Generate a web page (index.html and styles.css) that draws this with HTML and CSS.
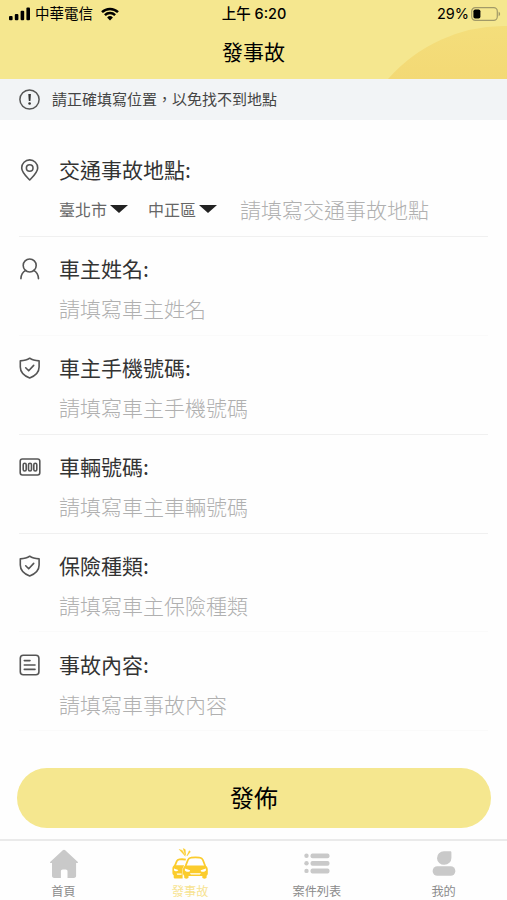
FILE: index.html
```html
<!DOCTYPE html>
<html lang="zh-Hant">
<head>
    <meta charset="UTF-8">
    <meta name="viewport" content="width=device-width, initial-scale=1.0">
    <title>發事故</title>
    <link rel="stylesheet" href="styles.css">
</head>
<body>
    <!-- Header -->
    <header class="header">
        <svg class="header-circle" width="119" height="53" viewBox="0 0 119 53">
            <defs>
                <linearGradient id="sun" x1="0" y1="0" x2="0" y2="1">
                    <stop offset="0" stop-color="#f4de7b" />
                    <stop offset="1" stop-color="#f3d975" />
                </linearGradient>
            </defs>
            <path d="M0 53A155 155 0 0 1 119 0V53Z" fill="url(#sun)" />
        </svg>
        <div class="status-bar">
            <div class="status-left">
                <svg width="22" height="14" viewBox="0 0 22 14">
                    <rect x="0" y="9" width="3.6" height="4.2" rx="1" />
                    <rect x="5.8" y="7" width="3.6" height="6.2" rx="1" />
                    <rect x="11.6" y="3.8" width="3.6" height="9.4" rx="1" />
                    <rect x="17.4" y="0.4" width="3.6" height="12.8" rx="1" />
                </svg>
                <span class="carrier">中華電信</span>
                <svg class="wifi" width="18" height="14" viewBox="0 0 18 14">
                    <path d="M1 5.1a11.6 11.6 0 0 1 16 0M3.9 8.1a7.4 7.4 0 0 1 10.2 0" fill="none" stroke="#000" stroke-width="2.5" />
                    <path d="M9 13.4L6.1 10.5a4.2 4.2 0 0 1 5.8 0Z" />
                </svg>
            </div>
            <span class="time">上午 6:20</span>
            <div class="status-right">
                <span>29%</span>
                <svg width="30" height="14" viewBox="0 0 30 14">
                    <rect x="0.7" y="0.7" width="25.6" height="12.6" rx="3.6" fill="none" stroke="#a29a68" stroke-width="1.2" />
                    <rect x="2.4" y="2.4" width="7" height="9.2" rx="1.8" />
                    <path d="M27.6 4.8c2 .7 2 3.7 0 4.4Z" fill="#a29a68" />
                </svg>
            </div>
        </div>
        <h1 class="title">發事故</h1>
    </header>

    <!-- Notice -->
    <div class="notice">
        <svg width="22" height="22" viewBox="0 0 22 22">
            <circle cx="11.5" cy="10.5" r="9.6" fill="none" stroke="#555" stroke-width="1.5" />
            <path d="M10.3 5h2.6l-.5 7h-1.6Z" fill="#333" />
            <circle cx="11.6" cy="14.5" r="1.3" fill="#333" />
        </svg>
        <p>請正確填寫位置，以免找不到地點</p>
    </div>

    <!-- Form -->
    <main class="form">
        <section class="field">
            <svg class="field-icon" viewBox="0 0 22 22">
                <path d="M10.7 21C7.3 17.4 2.7 13.2 2.7 8.9a8 8 0 0 1 16 0C18.7 13.2 14.1 17.4 10.7 21Z" />
                <circle cx="10.7" cy="9" r="3.3" />
            </svg>
            <div class="field-body">
                <h2>交通事故地點:</h2>
                <div class="field-line">
                    <span class="select">臺北市<i class="arrow"></i></span>
                    <span class="select">中正區<i class="arrow"></i></span>
                    <span class="hint">請填寫交通事故地點</span>
                </div>
            </div>
        </section>
        <section class="field faint">
            <svg class="field-icon" viewBox="0 0 22 22">
                <circle cx="10.7" cy="7.5" r="6.5" />
                <path d="M1.9 20.6c.2-4.2 2.1-6.7 4.9-8.2M19.5 20.6c-.2-4.2-2.1-6.7-4.9-8.2" />
            </svg>
            <div class="field-body">
                <h2>車主姓名:</h2>
                <div class="field-line"><span class="hint">請填寫車主姓名</span></div>
            </div>
        </section>
        <section class="field">
            <svg class="field-icon" viewBox="0 0 22 22">
                <path d="M10.7 1.2C8.2 3.1 4.7 3.8 1.3 3.9V10c0 5.4 4.2 9 9.4 11 5.2-2 9.4-5.6 9.4-11V3.9C16.7 3.8 13.2 3.1 10.7 1.2Z" />
                <path d="M6.7 10.8l3 3 5-5.4" />
            </svg>
            <div class="field-body">
                <h2>車主手機號碼:</h2>
                <div class="field-line"><span class="hint">請填寫車主手機號碼</span></div>
            </div>
        </section>
        <section class="field">
            <svg class="field-icon" viewBox="0 0 22 22">
                <rect x="1.2" y="3" width="19.6" height="16" rx="2.2" />
                <rect x="4.2" y="7.2" width="3" height="7.8" rx="1.5" />
                <rect x="9.5" y="7.2" width="3" height="7.8" rx="1.5" />
                <rect x="14.8" y="7.2" width="3" height="7.8" rx="1.5" />
            </svg>
            <div class="field-body">
                <h2>車輛號碼:</h2>
                <div class="field-line"><span class="hint">請填寫車主車輛號碼</span></div>
            </div>
        </section>
        <section class="field faint">
            <svg class="field-icon" viewBox="0 0 22 22">
                <path d="M10.7 1.2C8.2 3.1 4.7 3.8 1.3 3.9V10c0 5.4 4.2 9 9.4 11 5.2-2 9.4-5.6 9.4-11V3.9C16.7 3.8 13.2 3.1 10.7 1.2Z" />
                <path d="M6.7 10.8l3 3 5-5.4" />
            </svg>
            <div class="field-body">
                <h2>保險種類:</h2>
                <div class="field-line"><span class="hint">請填寫車主保險種類</span></div>
            </div>
        </section>
        <section class="field faint">
            <svg class="field-icon" viewBox="0 0 22 22">
                <rect x="1.3" y="1.3" width="18.6" height="19.4" rx="3" />
                <path d="M5.3 6.6h5.7M5.3 11h10.7M5.3 15.4h10.7" />
            </svg>
            <div class="field-body">
                <h2>事故內容:</h2>
                <div class="field-line"><span class="hint">請填寫車事故內容</span></div>
            </div>
        </section>
    </main>

    <button class="submit" type="button">發佈</button>

    <!-- Tab bar -->
    <nav class="tab-bar">
        <a class="tab">
            <svg width="38" height="34" viewBox="0 0 38 34" fill="#c9c9c9">
                <path d="M20 2.8c.5 0 .8.2 1.2.5L33.6 14.8c.7.7.4 1.3-.5 1.3h-1V28.7c0 1.400-.8 2.2-2.2 2.2H23.500V24.3c0-1.200-.7-1.900-1.900-1.900h-2.800c-1.200 0-1.900.7-1.900 1.900v6.600H10.200C8.800 30.900 8 30.100 8 28.700V16.1H6.900c-.9 0-1.200-.6-.5-1.300L18.800 3.300c.4-.3.700-.5 1.200-.5Z" />
            </svg>
            <span>首頁</span>
        </a>
        <a class="tab active">
            <svg width="38" height="34" viewBox="0 0 38 34" fill="#fbcc2d">
                <path d="M8.200 2.400l3 1 3.200 5.800ZM12.300 1.600l1.900 6.400.4-.4-.4-5ZM18.200 3.800l1.200.9-3.500 4.300Z" stroke="#fbcc2d" stroke-width="0.500" />
                <!-- rear car -->
                <path d="M3.600 19.400l2.200-5.200c.5-1.200 1.200-1.600 2.600-1.800 1.900-.2 4.500-.2 6.400.2" fill="none" stroke="#fbcc2d" stroke-width="1.800" />
                <path d="M3.400 18.200h9.800l-1.600 3.200v10H3.600c-.5 0-.9-.3-.9-.8v-2.300c-.9-.5-1.300-1.300-1.300-2.500v-4.300c0-1.600.8-2.600 2-3.300Z" />
                <path d="M3 21.600l4.200 1.500c.1 1.500-3.300 1.500-4.200.2ZM5.600 26.400h5v1.300H6.200Z" fill="#fff" />
                <!-- front car -->
                <path d="M14.600 19l2.300-6c.6-1.500 1.500-2.100 3.200-2.300 2.800-.4 5.800-.4 8.600 0 1.700.2 2.600.8 3.200 2.300l2.300 6" fill="none" stroke="#fbcc2d" stroke-width="1.800" />
                <path d="M14.500 18.400h19.800c1.900 1 2.500 2.300 2.500 4.200v4c0 1-.4 1.700-1.200 2.100v1.900c0 1.500-4.300 1.500-4.300 0v-1.600H17.500v1.600c0 1.500-4.300 1.500-4.300 0v-1.900c-.8-.4-1.200-1.100-1.200-2.100v-4c0-1.900.6-3.200 2.500-4.200Z" />
                <path d="M13.900 21.600l5.100 1.700c.6 1.900-4 2-5.100.3ZM34.900 21.600l-5.100 1.700c-.6 1.900 4 2 5.100.3ZM18.900 26.200h11l-1 1.200h-9Z" fill="#fff" />
            </svg>
            <span>發事故</span>
        </a>
        <a class="tab">
            <svg width="38" height="34" viewBox="0 0 38 34" fill="#c9c9c9">
                <circle cx="8.5" cy="8.8" r="2.2" /><rect x="12.5" y="6.5" width="19" height="4.8" rx="2" />
                <circle cx="8.5" cy="16.3" r="2.2" /><rect x="12.5" y="14" width="19" height="4.8" rx="2" />
                <circle cx="8.5" cy="23.9" r="2.2" /><rect x="12.5" y="21.6" width="19" height="4.8" rx="2" />
            </svg>
            <span>案件列表</span>
        </a>
        <a class="tab">
            <svg width="38" height="34" viewBox="0 0 38 34" fill="#c9c9c9">
                <path d="M19 4.2h6.200c.8 0 1.200.4 1.200 1.200v5.500A7.200 6.800 0 1 1 19 4.200Z" />
                <rect x="7.700" y="19.200" width="22.600" height="9.600" rx="4.600" />
            </svg>
            <span>我的</span>
        </a>
    </nav>
</body>
</html>
```
FILE: styles.css
```css
/* General Styling */
* {
    box-sizing: border-box;
}

body {
    font-family: "Noto Sans CJK TC", sans-serif;
    background-color: #fefefe;
    color: #333;
    margin: 0;
    height: 900px;
    display: flex;
    flex-direction: column;
    overflow: hidden;
}

svg {
    display: block;
    flex: none;
}

h1, h2, p {
    margin: 0;
    font-weight: 400;
}

/* Header */
.header {
    position: relative;
    height: 79px;
    background-color: #f5e78f;
    color: #000;
}

.header-circle {
    position: absolute;
    right: 0;
    bottom: 0;
}

.status-bar {
    position: relative;
    display: grid;
    grid-template-columns: 1fr auto 1fr;
    align-items: center;
    height: 27px;
    padding: 0 6px 0 9px;
    font-family: Inter, "Noto Sans CJK TC", sans-serif;
    font-size: 14.5px;
    line-height: 27px;
}

.status-left {
    display: flex;
    align-items: center;
    gap: 4px;
}

.wifi {
    margin-left: 4px;
}

.time {
    font-weight: 500;
    margin-left: -2px;
}

.status-right {
    display: flex;
    align-items: center;
    justify-content: flex-end;
    gap: 2px;
}

.title {
    position: relative;
    font-size: 21px;
    line-height: 30px;
    padding-top: 9px;
    text-align: center;
}

/* Notice */
.notice {
    display: flex;
    align-items: center;
    gap: 12px;
    height: 41px;
    padding-left: 18px;
    background-color: #f2f4f6;
    font-size: 15px;
}

.notice p {
    padding-bottom: 2px;
    color: #444;
}

/* Form */
.form {
    padding: 18px 19px 0;
}

.field {
    display: flex;
    gap: 29px;
    height: 98.9px;
    padding-top: 16px;
    border-bottom: 1px solid #f0f0f0;
}

.field:last-child {
    padding-top: 16.5px;
}

.field.faint {
    border-bottom-color: #fafafa;
}

.field-icon {
    width: 22px;
    height: 22px;
    margin: 5px -11px 0 0;
    fill: none;
    stroke: #555;
    stroke-width: 1.6;
    stroke-linecap: round;
    stroke-linejoin: round;
}

.field h2 {
    font-size: 21px;
    line-height: 30px;
}

.field-line {
    display: flex;
    align-items: center;
    height: 30px;
    margin-top: 10px;
}

.select {
    display: flex;
    align-items: center;
    gap: 3px;
    margin-right: 20px;
    font-size: 16px;
    color: #666;
}

.select + .hint {
    margin-left: 3px;
}

.arrow {
    border: 9px solid transparent;
    border-top: 8.5px solid #222;
    border-bottom: 0;
}

.hint {
    font-size: 21px;
    font-weight: 300;
    line-height: 30px;
    color: #b0b0b0;
}

/* Submit Button */
.submit {
    height: 60px;
    margin: 37px 16px 0 17px;
    padding-bottom: 4px;
    border: 0;
    border-radius: 30px;
    background-color: #f5e78f;
    color: #000;
    font-family: inherit;
    font-size: 24px;
}

/* Tab Bar */
.tab-bar {
    display: grid;
    grid-template-columns: repeat(4, 1fr);
    margin-top: auto;
    height: 61px;
    border-top: 2px solid #eaeaea;
}

.tab {
    display: flex;
    flex-direction: column;
    align-items: center;
    padding-top: 6px;
    font-size: 12.2px;
    line-height: 20px;
    color: #8b8b8b;
}

.active {
    color: #f7e391;
}
```
